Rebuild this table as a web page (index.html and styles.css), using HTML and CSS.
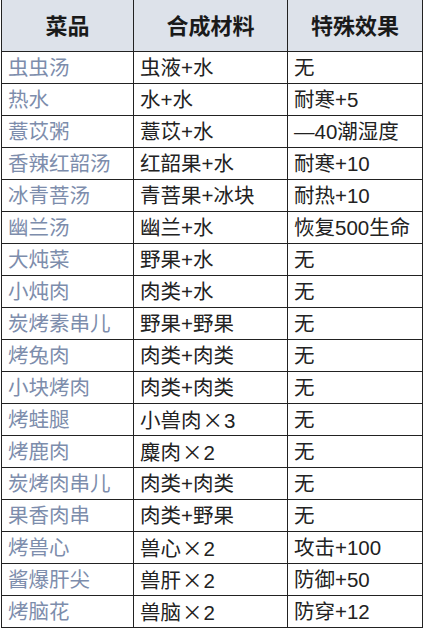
FILE: index.html
```html
<!DOCTYPE html>
<html lang="zh">
<head>
<meta charset="utf-8">
<link rel="stylesheet" href="styles.css">
</head>
<body>
<table class="recipes">
<colgroup><col class="c1"><col class="c2"><col class="c3"></colgroup>
<thead>
<tr><th>菜品</th><th>合成材料</th><th>特殊效果</th></tr>
</thead>
<tbody>
<tr><td class="dish">虫虫汤</td><td>虫液+水</td><td>无</td></tr>
<tr><td class="dish">热水</td><td>水+水</td><td>耐寒+5</td></tr>
<tr><td class="dish">薏苡粥</td><td>薏苡+水</td><td>—40潮湿度</td></tr>
<tr><td class="dish">香辣红韶汤</td><td>红韶果+水</td><td>耐寒+10</td></tr>
<tr><td class="dish">冰青菩汤</td><td>青菩果+冰块</td><td>耐热+10</td></tr>
<tr><td class="dish">幽兰汤</td><td>幽兰+水</td><td>恢复500生命</td></tr>
<tr><td class="dish">大炖菜</td><td>野果+水</td><td>无</td></tr>
<tr><td class="dish">小炖肉</td><td>肉类+水</td><td>无</td></tr>
<tr><td class="dish">炭烤素串儿</td><td>野果+野果</td><td>无</td></tr>
<tr><td class="dish">烤兔肉</td><td>肉类+肉类</td><td>无</td></tr>
<tr><td class="dish">小块烤肉</td><td>肉类+肉类</td><td>无</td></tr>
<tr><td class="dish">烤蛙腿</td><td>小兽肉<span class="mul">×</span>3</td><td>无</td></tr>
<tr><td class="dish">烤鹿肉</td><td>麋肉<span class="mul">×</span>2</td><td>无</td></tr>
<tr><td class="dish">炭烤肉串儿</td><td>肉类+肉类</td><td>无</td></tr>
<tr><td class="dish">果香肉串</td><td>肉类+野果</td><td>无</td></tr>
<tr><td class="dish">烤兽心</td><td>兽心<span class="mul">×</span>2</td><td>攻击+100</td></tr>
<tr><td class="dish">酱爆肝尖</td><td>兽肝<span class="mul">×</span>2</td><td>防御+50</td></tr>
<tr><td class="dish">烤脑花</td><td>兽脑<span class="mul">×</span>2</td><td>防穿+12</td></tr>
</tbody>
</table>
</body>
</html>
```
FILE: styles.css
```css
html, body {
  margin: 0;
  padding: 0;
  background: #ffffff;
}
body {
  font-family: "Liberation Sans", "Noto Sans CJK SC", sans-serif;
  color: #222222;
}
.recipes {
  border-collapse: collapse;
  table-layout: fixed;
  width: 421px;
  margin: -1px 0 0 1px;
}
.c1 { width: 132px; }
.c2 { width: 154px; }
.c3 { width: 135px; }
.recipes th,
.recipes td {
  border: 1px solid #222;
  padding: 0 0 0 6px;
  white-space: nowrap;
  overflow: hidden;
  box-sizing: border-box;
}
.recipes th {
  height: 52px;
  background: #dde2ea;
  font-size: 22px;
  line-height: 24px;
  font-weight: bold;
  text-align: center;
  padding: 2px 0 0 0;
  color: #1a1a1a;
}
.recipes td {
  height: 32px;
  font-size: 20.5px;
  line-height: 22px;
  text-align: left;
  vertical-align: middle;
  padding-top: 1px;
}
.recipes td.dish {
  color: #7d8dac;
}
.mul {
  font-family: "Noto Sans CJK SC", sans-serif;
  padding: 0 1px;
}
```
